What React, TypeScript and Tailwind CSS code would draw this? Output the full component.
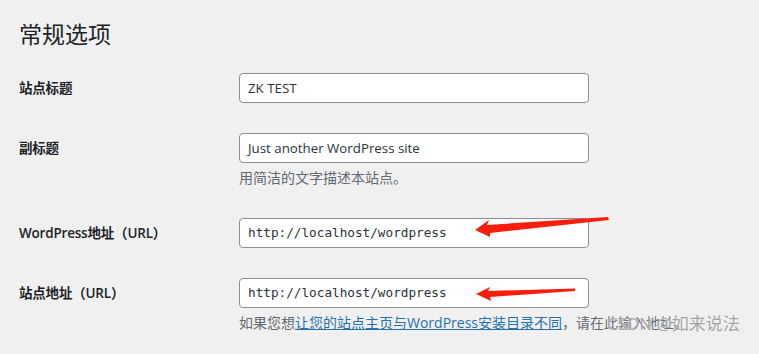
import React from "react";

const cjk = "font-['Open_Sans','Noto_Sans_CJK_SC',sans-serif]";

function Row({
  label,
  value,
  mono,
  children,
}: {
  label: string;
  value: string;
  mono?: boolean;
  children?: React.ReactNode;
}) {
  return (
    <div className="flex py-[15px]">
      <div className="w-[220px] shrink-0 h-[30px] leading-[30px] text-[13.5px] font-semibold text-[#1d2327] tracking-[-0.2px]">
        {label}
      </div>
      <div className="flex flex-col">
        <div
          className={
            "w-[350px] h-[30px] rounded-[4px] border border-[#8c8f94] bg-white px-[8px] leading-[28px] text-[#2c3338] " +
            (mono
              ? "font-['DejaVu_Sans_Mono',monospace] text-[12.7px]"
              : "text-[13.3px]")
          }
        >
          {value}
        </div>
        {children && (
          <div className="mt-[5px] h-[20px] leading-[20px] text-[14px] text-[#646970] whitespace-nowrap">
            {children}
          </div>
        )}
      </div>
    </div>
  );
}

export default function App() {
  return (
    <div className={`relative min-h-screen w-full overflow-hidden bg-[#f0f0f1] pl-[19px] ${cjk}`}>
      <h1 className="pt-[19px] h-[49px] leading-[30px] text-[23px] font-normal text-[#1d2327] mb-[9px]">
        常规选项
      </h1>

      <Row label="站点标题" value="ZK TEST" />
      <Row label="副标题" value="Just another WordPress site">
        用简洁的文字描述本站点。
      </Row>
      <Row label="WordPress地址（URL）" value="http://localhost/wordpress" mono />
      <Row label="站点地址（URL）" value="http://localhost/wordpress" mono>
        如果您想
        <span className="text-[#2271b1] underline">让您的站点主页与WordPress安装目录不同</span>
        ，请在此输入地址。
      </Row>

      {/* red annotation arrows */}
      <svg className="pointer-events-none absolute inset-0" width="759" height="354">
        <polygon
          points="475,230 489,220 487,225 608,217 609,220 490,233 490,237"
          fill="#f71e0e"
        />
        <polygon
          points="476,294 490,287 488,291 575,288.5 575,291 490,297 491,301"
          fill="#f71e0e"
        />
      </svg>

      {/* CSDN watermark */}
      <div className="absolute left-[607px] top-[313px] text-[17px] leading-[22px] text-[#a4a4a4] whitespace-nowrap [text-shadow:0_0_1px_#ffffff]">
        CSDN @如来说法
      </div>
    </div>
  );
}
